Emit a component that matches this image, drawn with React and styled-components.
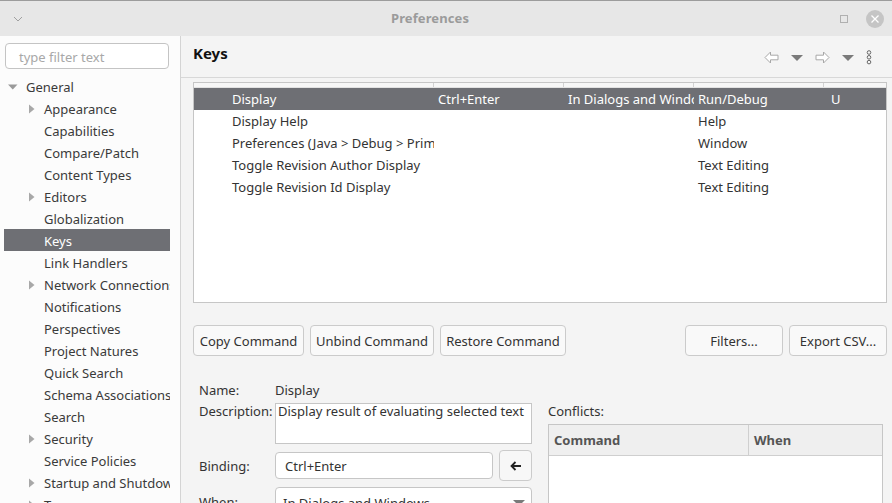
import React from 'react';
import styled, { createGlobalStyle } from 'styled-components';

const Global = createGlobalStyle`
  html, body { margin: 0; padding: 0; background: #f4f4f4; }
  body {
    font-family: "Noto Sans", "Open Sans", sans-serif;
    font-size: 13px;
    color: #3a3a3a;
  }
  * { box-sizing: border-box; }
`;

const Window = styled.div`
  width: 892px;
  height: 503px;
  overflow: hidden;
  display: flex;
  flex-direction: column;
  background: #f4f4f4;
`;

const TitleBar = styled.div`
  flex: none;
  height: 36px;
  display: flex;
  align-items: center;
  background: #e7e7e7;
  border-top: 1px solid #9c9c9c;
`;

const TitleMenu = styled.div`
  flex: none;
  width: 30px;
  padding-left: 12px;
  display: flex;
  align-items: center;
`;

const TitleText = styled.div`
  flex: 1;
  text-align: center;
  font-weight: 700;
  font-size: 13px;
  color: #9b9b9b;
  letter-spacing: 0.1px;
  margin-top: -1px;
`;

const WinControls = styled.div`
  flex: none;
  width: 62px;
  padding: 0 8px 0 9px;
  display: flex;
  justify-content: space-between;
  align-items: center;
`;

const Body = styled.div`
  flex: 1;
  min-height: 0;
  display: flex;
`;

const Sidebar = styled.div`
  flex: none;
  width: 181px;
  background: #fcfcfc;
  border-right: 1px solid #d4d4d4;
  padding: 7px 0 0 4px;
  display: flex;
  flex-direction: column;
`;

const Filter = styled.div`
  margin-left: 1px;
  width: 164px;
  height: 27px;
  border: 1px solid #c4c4c4;
  border-radius: 4px;
  background: #fff;
  display: flex;
  align-items: center;
  padding: 1px 0 0 13px;
  color: #a8a8a8;
`;

const Tree = styled.div`
  margin-top: 6px;
  width: 166px;
  overflow: hidden;
`;

const TreeRow = styled.div`
  height: 22px;
  display: flex;
  align-items: center;
  white-space: nowrap;
  padding-top: 2px;
  padding-left: ${p => 4 + p.$level * 18}px;
  background: ${p => (p.$selected ? '#6e6f74' : 'transparent')};
  color: ${p => (p.$selected ? '#ffffff' : '#3a3a3a')};
`;

const Twisty = styled.span`
  flex: none;
  width: 18px;
  height: 20px;
  display: flex;
  align-items: center;
`;

const Main = styled.div`
  flex: 1;
  min-width: 0;
  display: flex;
  flex-direction: column;
`;

const PanelHeader = styled.div`
  flex: none;
  height: 42px;
  border-bottom: 1px solid #d8d8d8;
  display: flex;
  justify-content: space-between;
  padding: 0 20px 0 12px;
`;

const PanelTitle = styled.div`
  margin-top: 7px;
  font-size: 15px;
  font-weight: 700;
  line-height: 20px;
  color: #111;
`;

const Toolbar = styled.div`
  align-self: center;
  display: flex;
  align-items: center;
  gap: 12px;
  padding-top: 2px;
`;

const Content = styled.div`
  flex: 1;
  min-height: 0;
  padding: 4px 5px 0 12px;
  display: flex;
  flex-direction: column;
`;

const KeysTable = styled.div`
  flex: none;
  height: 221px;
  border: 1px solid #c6c6c6;
  background: #fff;
  overflow: hidden;
`;

const HeaderStrip = styled.div`
  height: 5px;
  display: flex;
  background: #f7f7f7;
  border-bottom: 1px solid #e2e2e2;
`;

const HeaderCell = styled.div`
  flex: none;
  width: ${p => p.$w}px;
  border-right: 1px solid #d2d2d2;
`;

const Row = styled.div`
  height: 22px;
  display: flex;
  align-items: center;
  background: ${p => (p.$selected ? '#6e6f74' : 'transparent')};
  color: ${p => (p.$selected ? '#fff' : '#333')};
`;

const Cell = styled.div`
  flex: none;
  width: ${p => p.$w}px;
  padding-left: ${p => p.$pad}px;
  white-space: nowrap;
  overflow: hidden;
`;

const ButtonRow = styled.div`
  margin-top: 22px;
  display: flex;
  gap: 6px;
  height: 31px;
  flex: none;
`;

const Spacer = styled.div`
  flex: 1;
`;

const Button = styled.div`
  width: ${p => p.$w}px;
  height: 31px;
  border: 1px solid #cbcbcb;
  border-radius: 4px;
  background: #f9f9f9;
  display: flex;
  align-items: center;
  justify-content: center;
  color: #333;
  white-space: nowrap;
`;

const Lower = styled.div`
  margin-top: 24px;
  display: flex;
  gap: 16px;
`;

const Form = styled.div`
  width: 339px;
  padding-left: 6px;
  display: grid;
  grid-template-columns: 76px 257px;
  grid-template-rows: 19px 43px 31px 33px;
  row-gap: 4px;
  align-items: center;
`;

const Label = styled.div`
  color: #333;
  align-self: ${p => (p.$top ? 'start' : 'center')};
  margin-top: ${p => (p.$top ? -1 : 0)}px;
  line-height: 18px;
  white-space: nowrap;
`;

const Value = styled.div`
  color: #333;
`;

const TextArea = styled.div`
  align-self: start;
  height: 41px;
  border: 1px solid #c6c6c6;
  background: #fff;
  padding: 0 2px;
  line-height: 15px;
  color: #333;
  white-space: nowrap;
  overflow: hidden;
`;

const BindingWrap = styled.div`
  display: flex;
  align-items: center;
  gap: 6px;
`;

const Input = styled.div`
  width: 218px;
  height: 27px;
  border: 1px solid #c6c6c6;
  border-radius: 4px;
  background: #fff;
  display: flex;
  align-items: center;
  padding-left: 9px;
  color: #333;
`;

const IconButton = styled.div`
  width: 33px;
  height: 31px;
  border: 1px solid #cbcbcb;
  border-radius: 4px;
  background: #f7f7f7;
  display: flex;
  align-items: center;
  justify-content: center;
`;

const Combo = styled.div`
  align-self: end;
  height: 31px;
  border: 1px solid #c6c6c6;
  border-radius: 4px;
  background: #fff;
  display: flex;
  align-items: center;
  justify-content: space-between;
  padding: 0 6px 0 7px;
  color: #333;
`;

const Conflicts = styled.div`
  width: 335px;
  padding-top: 23px;
  display: flex;
  flex-direction: column;
`;

const ConflictsLabel = styled.div`
  line-height: 18px;
  margin-top: -1px;
  color: #333;
`;

const ConflictTable = styled.div`
  margin-top: 4px;
  height: 100px;
  border: 1px solid #c6c6c6;
  background: #fff;
`;

const ConflictHead = styled.div`
  height: 31px;
  display: flex;
  background: #efefef;
  border-bottom: 1px solid #cfcfcf;
`;

const ConflictHeadCell = styled.div`
  width: ${p => (p.$w ? `${p.$w}px` : 'auto')};
  flex: ${p => (p.$w ? 'none' : 1)};
  border-right: ${p => (p.$w ? '1px solid #cfcfcf' : 'none')};
  padding-left: 5px;
  display: flex;
  align-items: center;
  font-weight: 700;
  color: #555;
`;

const Down = ({ color = '#9a9a9a' }) => (
  <svg width="12" height="12" viewBox="0 0 12 12">
    <path d="M0 3.5 L9.5 3.5 L4.75 8.5 Z" fill={color} />
  </svg>
);

const Right = () => (
  <svg width="12" height="12" viewBox="0 0 12 12">
    <path d="M3 1.5 L8.5 6 L3 10.5 Z" fill="#a8a8a8" />
  </svg>
);

const Dropdown = () => (
  <svg width="12" height="8" viewBox="0 0 12 8">
    <path d="M0 1 L12 1 L6 7 Z" fill="#7a7a7a" />
  </svg>
);

const ArrowLeft = () => (
  <svg width="15" height="13" viewBox="0 0 15 13">
    <path d="M1 6.5 L6.5 1 L6.5 4.2 L14 4.2 L14 8.8 L6.5 8.8 L6.5 12 Z" fill="#fff" stroke="#a8a8a8" strokeWidth="1" />
  </svg>
);

const ArrowRight = () => (
  <svg width="15" height="13" viewBox="0 0 15 13">
    <path d="M14 6.5 L8.5 1 L8.5 4.2 L1 4.2 L1 8.8 L8.5 8.8 L8.5 12 Z" fill="#fff" stroke="#a8a8a8" strokeWidth="1" />
  </svg>
);

const Kebab = () => (
  <svg width="6" height="15" viewBox="0 0 6 15">
    <circle cx="3" cy="2.5" r="1.8" fill="none" stroke="#666" strokeWidth="1" />
    <circle cx="3" cy="7.3" r="1.8" fill="none" stroke="#666" strokeWidth="1" />
    <circle cx="3" cy="12.1" r="1.8" fill="none" stroke="#666" strokeWidth="1" />
  </svg>
);

const tree = [
  { label: 'General', level: 0, arrow: 'down' },
  { label: 'Appearance', level: 1, arrow: 'right' },
  { label: 'Capabilities', level: 1 },
  { label: 'Compare/Patch', level: 1 },
  { label: 'Content Types', level: 1 },
  { label: 'Editors', level: 1, arrow: 'right' },
  { label: 'Globalization', level: 1 },
  { label: 'Keys', level: 1, selected: true },
  { label: 'Link Handlers', level: 1 },
  { label: 'Network Connections', level: 1, arrow: 'right' },
  { label: 'Notifications', level: 1 },
  { label: 'Perspectives', level: 1 },
  { label: 'Project Natures', level: 1 },
  { label: 'Quick Search', level: 1 },
  { label: 'Schema Associations', level: 1 },
  { label: 'Search', level: 1 },
  { label: 'Security', level: 1, arrow: 'right' },
  { label: 'Service Policies', level: 1 },
  { label: 'Startup and Shutdown', level: 1, arrow: 'right' },
  { label: 'Team', level: 1, arrow: 'right' },
];

const cols = [
  { w: 240, pad: 38 },
  { w: 130, pad: 4 },
  { w: 130, pad: 4 },
  { w: 130, pad: 4 },
  { w: 64, pad: 7 },
];

const rows = [
  ['Display', 'Ctrl+Enter', 'In Dialogs and Windows', 'Run/Debug', 'U'],
  ['Display Help', '', '', 'Help', ''],
  ['Preferences (Java > Debug > Primitive Display Options)', '', '', 'Window', ''],
  ['Toggle Revision Author Display', '', '', 'Text Editing', ''],
  ['Toggle Revision Id Display', '', '', 'Text Editing', ''],
];

export default function App() {
  return (
    <>
      <Global />
      <Window>
        <TitleBar>
          <TitleMenu>
            <svg width="12" height="8" viewBox="0 0 12 8">
              <path d="M2 2 L6 6 L10 2" fill="none" stroke="#a0a0a0" strokeWidth="1" />
            </svg>
          </TitleMenu>
          <TitleText>Preferences</TitleText>
          <WinControls>
            <svg width="10" height="10" viewBox="0 0 10 10">
              <rect x="1.5" y="1.5" width="7" height="7" fill="none" stroke="#b0b0b0" strokeWidth="1" />
            </svg>
            <svg width="18" height="18" viewBox="0 0 18 18">
              <circle cx="9" cy="9" r="9" fill="#c5c5c5" />
              <path d="M5.5 5.5 L12.5 12.5 M12.5 5.5 L5.5 12.5" stroke="#fff" strokeWidth="1.3" />
            </svg>
          </WinControls>
        </TitleBar>
        <Body>
          <Sidebar>
            <Filter>type filter text</Filter>
            <Tree>
              {tree.map(t => (
                <TreeRow key={t.label} $level={t.level} $selected={t.selected}>
                  <Twisty>
                    {t.arrow === 'down' && <Down />}
                    {t.arrow === 'right' && <Right />}
                  </Twisty>
                  {t.label}
                </TreeRow>
              ))}
            </Tree>
          </Sidebar>
          <Main>
            <PanelHeader>
              <PanelTitle>Keys</PanelTitle>
              <Toolbar>
                <ArrowLeft />
                <Dropdown />
                <ArrowRight />
                <Dropdown />
                <Kebab />
              </Toolbar>
            </PanelHeader>
            <Content>
              <KeysTable>
                <HeaderStrip>
                  {cols.map((c, i) => (
                    <HeaderCell key={i} $w={c.w} />
                  ))}
                </HeaderStrip>
                {rows.map((r, i) => (
                  <Row key={i} $selected={i === 0}>
                    {r.map((v, j) => (
                      <Cell key={j} $w={cols[j].w} $pad={cols[j].pad}>
                        {v}
                      </Cell>
                    ))}
                  </Row>
                ))}
              </KeysTable>
              <ButtonRow>
                <Button $w={111}>Copy Command</Button>
                <Button $w={124}>Unbind Command</Button>
                <Button $w={126}>Restore Command</Button>
                <Spacer />
                <Button $w={98}>Filters...</Button>
                <Button $w={98}>Export CSV...</Button>
              </ButtonRow>
              <Lower>
                <Form>
                  <Label>Name:</Label>
                  <Value>Display</Value>
                  <Label $top>Description:</Label>
                  <TextArea>Display result of evaluating selected text</TextArea>
                  <Label>Binding:</Label>
                  <BindingWrap>
                    <Input>Ctrl+Enter</Input>
                    <IconButton>
                      <svg width="12" height="12" viewBox="0 0 12 12">
                        <path d="M11 6 L1.5 6 M5.5 2 L1.5 6 L5.5 10" fill="none" stroke="#222" strokeWidth="1.8" />
                      </svg>
                    </IconButton>
                  </BindingWrap>
                  <Label>When:</Label>
                  <Combo>
                    In Dialogs and Windows
                    <Dropdown />
                  </Combo>
                </Form>
                <Conflicts>
                  <ConflictsLabel>Conflicts:</ConflictsLabel>
                  <ConflictTable>
                    <ConflictHead>
                      <ConflictHeadCell $w={200}>Command</ConflictHeadCell>
                      <ConflictHeadCell>When</ConflictHeadCell>
                    </ConflictHead>
                  </ConflictTable>
                </Conflicts>
              </Lower>
            </Content>
          </Main>
        </Body>
      </Window>
    </>
  );
}
